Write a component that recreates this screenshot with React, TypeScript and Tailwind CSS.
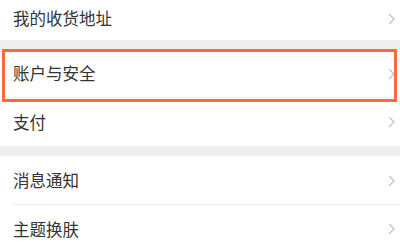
import React from "react";

function Chevron() {
  return (
    <svg width="8" height="12" viewBox="0 0 8 12" className="shrink-0">
      <path d="M1.5 1.5 L6 6 L1.5 10.5" fill="none" stroke="#c4c4c4" strokeWidth="1.4" strokeLinecap="round" strokeLinejoin="round" />
    </svg>
  );
}

function Row({ label, h = "h-[48px]", border = false, extra = "" }: { label: string; h?: string; border?: boolean; extra?: string }) {
  return (
    <div className={`relative flex items-center justify-between bg-white pl-[13px] pr-[4px] ${h} ${extra}`}>
      <span className="text-[16.5px] leading-none text-[#333333]">{label}</span>
      <Chevron />
      {border && <div className="absolute bottom-0 left-[12px] right-0 h-px bg-[#eeeeee]" />}
    </div>
  );
}

export default function App() {
  return (
    <div
      className="relative w-[400px] h-[249px] overflow-hidden bg-white"
      style={{ fontFamily: '"Noto Sans CJK SC", "Noto Sans", sans-serif' }}
    >
      <Row label="我的收货地址" h="h-[40px]" extra="pb-[3px]" />
      <div className="h-[9px] bg-[#efefef]" />
      <Row label="账户与安全" h="h-[49px]" border />
      <Row label="支付" />
      <div className="h-[10px] bg-[#efefef]" />
      <Row label="消息通知" h="h-[49px]" border />
      <Row label="主题换肤" />
      <div className="absolute left-[2px] top-[49px] w-[395px] h-[53px] border-[3.5px] border-[#fa6a3c]" />
    </div>
  );
}
